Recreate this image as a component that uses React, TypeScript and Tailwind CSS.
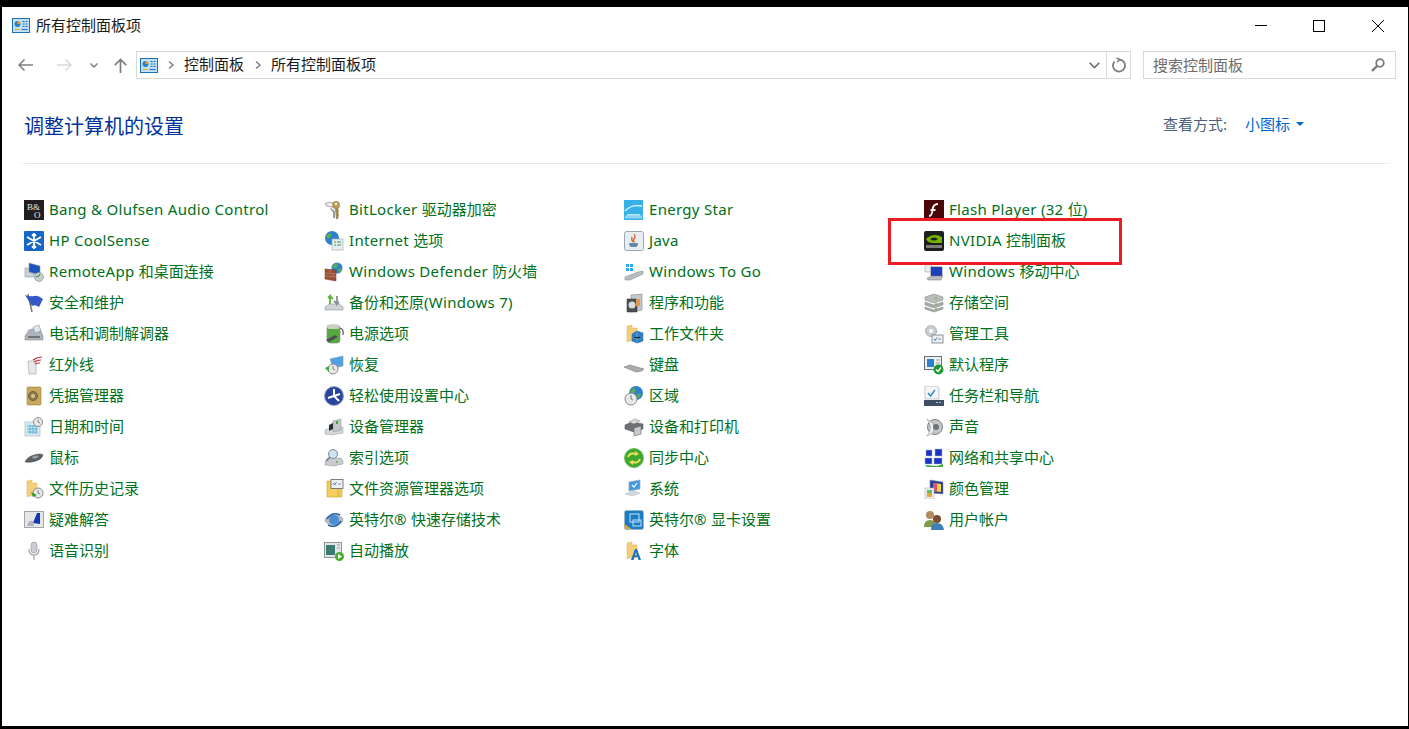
import type { ReactNode } from "react";

const Svg = ({ children }: { children: ReactNode }) => (
  <svg viewBox="0 0 20 20" className="w-5 h-5 shrink-0">
    {children}
  </svg>
);

// Little clock badge shared by a few of the icons
const Clock = ({ x = 14, y = 14, r = 5 }: { x?: number; y?: number; r?: number }) => (
  <>
    <circle cx={x} cy={y} r={r} fill="#e8e8e8" stroke="#8a8a8a" />
    <path d={`M${x} ${y - r + 2}V${y}L${x + 2} ${y + 1}`} stroke="#666" fill="none" strokeWidth="0.8" />
  </>
);

const Globe = ({ x = 8, y = 7, r = 6 }: { x?: number; y?: number; r?: number }) => (
  <>
    <circle cx={x} cy={y} r={r} fill="#2f7fd0" />
    <path d={`M${x - r + 1} ${y - 2}q3 -3 5 -3q1 3 -1 5q-3 1 -4 -2z`} fill="#57b04a" />
    <path d={`M${x + 1} ${y + 1}q3 -1 4 0q0 3 -3 4z`} fill="#57b04a" />
  </>
);

const Folder = () => (
  <path d="M3 2l5 -1v3h5v13H5l-2 1z" fill="#f2cf78" stroke="#d9b35a" strokeWidth="0.5" />
);

const Monitor = ({ fill = "#3f9be6" }: { fill?: string }) => (
  <>
    <path d="M5 3l11 -2v9l-11 2z" fill={fill} stroke="#9aa4ad" strokeWidth="0.7" />
    <path d="M1 15l9 -3 6 2-8 3z" fill="#d4d8dc" stroke="#aab0b6" strokeWidth="0.5" />
  </>
);

const icons: Record<string, ReactNode> = {
  bo: (
    <>
      <rect width="20" height="20" fill="#231f20" />
      <text x="3" y="10" fontSize="9" fill="#e5e5e5" fontFamily="Liberation Serif, serif">B&amp;</text>
      <text x="10" y="17.500" fontSize="9" fill="#e5e5e5" fontFamily="Liberation Serif, serif">O</text>
    </>
  ),
  snow: (
    <>
      <rect width="20" height="20" rx="1" fill="#1668c8" />
      <path d="M10 2v16M3 6l14 8M17 6L3 14M8 3.500l2 2 2-2M8 16.500l2-2 2 2" stroke="#fff" strokeWidth="1.800" fill="none" />
    </>
  ),
  remote: (
    <>
      <rect x="1" y="6" width="9" height="9" fill="#ccd2d8" stroke="#8f98a0" strokeWidth="0.6" />
      <path d="M5 1l11 3v9L5 10z" fill="#1c54b8" stroke="#8f98a0" strokeWidth="0.6" />
      <circle cx="15" cy="15" r="4.500" fill="#c9cdd0" stroke="#8a8a8a" strokeWidth="0.6" />
      <path d="M12 15l3-1 1-2" stroke="#2f8f3a" fill="none" />
    </>
  ),
  flag: (
    <>
      <path d="M4 1l4 18" stroke="#777" strokeWidth="1.500" />
      <path d="M1 2q5 2 9 1t9 3l-4 8q-4-3-7-1z" fill="#3458c4" />
    </>
  ),
  phone: (
    <>
      <path d="M1 12l4-6 10-3 4 9v4H1z" fill="#aeb4b9" stroke="#858b90" strokeWidth="0.6" />
      <path d="M9 3l6-2 2 6-6 2z" fill="#dbe6ee" stroke="#7f8a92" strokeWidth="0.5" />
      <path d="M4 12h12v2H4z" fill="#6f757a" />
    </>
  ),
  infrared: (
    <>
      <path d="M4 6h8v13H5z" fill="#e6e8ea" stroke="#a7abaf" strokeWidth="0.7" />
      <path d="M9 5q4-3 9-3M10 7q3-2 7-2M11 9q2-1 5-1" stroke="#c9333a" fill="none" strokeWidth="1.200" />
    </>
  ),
  vault: (
    <>
      <rect x="3" y="1" width="14" height="18" rx="1" fill="#c9a85c" stroke="#9c8144" strokeWidth="0.6" />
      <circle cx="9" cy="10" r="4.500" fill="#8f7a4c" stroke="#6e5d38" />
      <circle cx="9" cy="10" r="2" fill="#d8c48f" />
    </>
  ),
  calendar: (
    <>
      <rect x="1" y="5" width="15" height="14" fill="#d9e9f3" stroke="#a6b2ba" strokeWidth="0.6" />
      <path d="M3 9h11M3 12h11M3 15h11M6 8v9M9 8v9M12 8v9" stroke="#3fa6d0" strokeWidth="0.8" />
      <Clock x={14} y={5} r={4.500} />
    </>
  ),
  mouse: (
    <>
      <path d="M1 14q2-5 9-7t9 0q-1 4-7 6t-11 1z" fill="#5c6266" stroke="#3f4447" strokeWidth="0.5" />
      <path d="M9 8q4-1 6 0l-2 2q-3 1-5 0z" fill="#9aa0a5" />
    </>
  ),
  history: (
    <>
      <Folder />
      <Clock x={14} y={14} r={5} />
      <path d="M7 13l2 5 4-2" fill="#2f9e3a" />
    </>
  ),
  trouble: (
    <>
      <rect x="0.500" y="1.500" width="19" height="16" fill="#e4e6e8" stroke="#a2a6aa" />
      <path d="M9 13l4-10h3v11z" fill="#1436b4" />
      <path d="M3 16l2-5h4l1 5z" fill="#b4b8bc" />
    </>
  ),
  mic: (
    <>
      <rect x="7" y="1" width="6" height="11" rx="3" fill="#c9ccd0" stroke="#8f9296" strokeWidth="0.6" />
      <path d="M5 8q0 6 5 6t5-6M10 14v5" stroke="#a0a3a7" fill="none" strokeWidth="1.200" />
    </>
  ),
  keys: (
    <>
      <path d="M1 4q4-3 9 0M1 4q3 3 9 3" stroke="#b4b8bc" fill="none" strokeWidth="1.300" />
      <circle cx="12" cy="5" r="4" fill="#b59a5c" />
      <circle cx="12" cy="4" r="1.300" fill="#f2ead0" />
      <path d="M11 8h3l1 4-1 1 1 1-1 5h-2z" fill="#a18a52" />
      <path d="M7 8l4 3v7h-2v-6l-3-3z" fill="#9a9da0" />
    </>
  ),
  ie: (
    <>
      <Globe x={8} y={7} r={7} />
      <rect x="8" y="8" width="11" height="11" fill="#e8edf2" stroke="#9aa5ae" strokeWidth="0.6" />
      <path d="M10 11h2M13 11h4M10 14h2M13 14h4" stroke="#3f9a4a" />
    </>
  ),
  firewall: (
    <>
      <Globe x={13} y={6} r={5.500} />
      <path d="M1 7l11 1v11l-11-2z" fill="#9a4f35" stroke="#6e3523" strokeWidth="0.5" />
      <path d="M1 11l11 1M1 14l11 1M6 8v3M9 12v3" stroke="#c98e72" strokeWidth="0.6" />
    </>
  ),
  backup: (
    <>
      <path d="M1 14l5-3h9l4 3v3H1z" fill="#cfd3d6" stroke="#8f9396" strokeWidth="0.6" />
      <path d="M6 11V3l-2 2M6 3l3 3" stroke="#5cb23c" fill="none" strokeWidth="1.800" />
      <path d="M13 3v8l2-2M13 11l-3-3" stroke="#8a8f92" fill="none" strokeWidth="1.800" />
    </>
  ),
  power: (
    <>
      <rect x="3" y="1" width="13" height="18" rx="3" fill="#56a83f" stroke="#7d8a78" strokeWidth="0.6" />
      <rect x="3" y="1" width="13" height="4" rx="2" fill="#c6d0c2" />
      <path d="M15 4q5 0 4 7" stroke="#555" fill="none" strokeWidth="1.200" />
      <path d="M2 16l9-5 3 2-9 5z" fill="#4a4f52" />
    </>
  ),
  recovery: (
    <>
      <path d="M6 4l13-3v10l-10 2z" fill="#4fa3e4" stroke="#8a98a3" strokeWidth="0.6" />
      <Clock x={9} y={14} r={5} />
      <path d="M1 13l4-2v6z" fill="#3fa53f" />
    </>
  ),
  ease: (
    <>
      <circle cx="10" cy="10" r="9.500" fill="#27479f" stroke="#9aa5c4" />
      <path d="M10 3v7l6-2M10 10l5 5M10 10l-6 2" stroke="#fff" strokeWidth="2" fill="none" />
    </>
  ),
  devmgr: (
    <>
      <path d="M1 13l7-3 11 0v6l-11 2-7-1z" fill="#d5d8da" stroke="#989c9f" strokeWidth="0.5" />
      <path d="M9 4l8-2v11l-8 2z" fill="#c4c7ca" stroke="#8c9093" strokeWidth="0.5" />
      <path d="M5 8l4-2v6l-4 2z" fill="#2a2d2f" />
      <rect x="12" y="4" width="2" height="3" fill="#3fa53f" />
    </>
  ),
  index: (
    <>
      <path d="M1 14l7-4h9l2 3v3l-9 2-9-1z" fill="#c8ccd0" stroke="#909498" strokeWidth="0.5" />
      <circle cx="9" cy="6" r="4.500" fill="#cfe2f2" stroke="#7f8a94" />
      <path d="M6 9l-4 4" stroke="#7f8a94" strokeWidth="1.800" />
      <circle cx="13" cy="14" r="1" fill="#5cb23c" />
    </>
  ),
  explorer: (
    <>
      <path d="M3 2h11v16H3z" fill="#f2cf60" stroke="#d9b040" strokeWidth="0.8" />
      <path d="M14 18h4V8h-4z" fill="#eec654" stroke="#d9b040" strokeWidth="0.6" />
      <rect x="7" y="0.500" width="12" height="9" fill="#eef1f4" stroke="#5a6470" strokeWidth="0.8" />
      <path d="M9 4l1.500 2 2-3" stroke="#2f7fd0" fill="none" />
      <path d="M14 5h3" stroke="#8a929a" />
    </>
  ),
  rst: (
    <>
      <ellipse cx="10" cy="10" rx="9" ry="5" fill="#b8bec4" stroke="#858b91" strokeWidth="0.5" />
      <circle cx="10" cy="10" r="5" fill="#4a8ed0" />
      <path d="M3 9q5-8 13-4M17 11q-5 8-13 4" stroke="#1f5fa8" fill="none" strokeWidth="1.500" />
    </>
  ),
  autoplay: (
    <>
      <rect x="0.500" y="1.500" width="17" height="15" fill="#e3e5e7" stroke="#8f9497" />
      <rect x="2" y="4" width="9" height="10" fill="#3c7a74" />
      <path d="M13 4h3M13 7h3" stroke="#9aa0a4" />
      <circle cx="15.500" cy="15.500" r="4.500" fill="#46ad2f" />
      <path d="M14 13l4 2.500-4 2.500z" fill="#fff" />
    </>
  ),
  energy: (
    <>
      <rect width="19" height="20" fill="#38b0e8" />
      <path d="M1 11q6-7 17-5M3 15h13" stroke="#dff3fc" strokeWidth="1.300" fill="none" />
      <rect x="1" y="15.500" width="17" height="3" fill="#8fd4f3" />
    </>
  ),
  java: (
    <>
      <rect x="0.500" y="0.500" width="19" height="19" rx="2" fill="#e9edf1" stroke="#9aa7b3" />
      <path d="M10 3q2 3 0 5t1 3M8 6q-1 3 1 5" stroke="#d8622c" fill="none" strokeWidth="1.300" />
      <path d="M5 12h9q0 3-2 4H7q-2-1-2-4z" fill="#5d88a8" />
    </>
  ),
  togo: (
    <>
      <path d="M2 2h3v3H2zM6 2h3v3H6zM2 6h3v3H2zM6 6h3v3H6z" fill="#2aa8f0" />
      <path d="M1 15l13-5 5-1v3l-13 6-5 0z" fill="#b9bdc1" stroke="#7d8184" strokeWidth="0.5" />
    </>
  ),
  programs: (
    <>
      <path d="M7 2l11-1v16l-11 2z" fill="#c5c8ca" stroke="#83878a" strokeWidth="0.6" />
      <path d="M3 6h10v13H3z" fill="#4c4f51" stroke="#2f3133" strokeWidth="0.5" />
      <circle cx="8" cy="12" r="3.500" fill="#d9dcde" />
      <rect x="12" y="6" width="4" height="7" fill="#e09a4a" />
    </>
  ),
  workfolder: (
    <>
      <Folder />
      <path d="M8 10l5-3 6 2v8l-6 2-5-2z" fill="#2f7fc4" stroke="#1f5f9c" strokeWidth="0.5" />
      <path d="M8 13l5 2 6-2M13 8v10" stroke="#7fc0ec" strokeWidth="0.6" />
    </>
  ),
  keyboard: <path d="M0 12l6-2 14 4-2 2-6 1z" fill="#a9adb1" stroke="#75797c" strokeWidth="0.6" />,
  region: (
    <>
      <Globe x={12} y={7} r={7} />
      <Clock x={7} y={13} r={6} />
    </>
  ),
  printer: (
    <>
      <path d="M1 8l7-3 11 2v5l-9 3-9-3z" fill="#6e7174" stroke="#444" strokeWidth="0.5" />
      <path d="M5 5l6-3 5 2-6 3z" fill="#d9dbdd" stroke="#777" strokeWidth="0.5" />
      <path d="M10 11l7-2v8l-7 2z" fill="#c8cacc" stroke="#666" strokeWidth="0.6" />
    </>
  ),
  sync: (
    <>
      <circle cx="10" cy="10" r="9.500" fill="#3fa82f" stroke="#6fbd5f" />
      <path d="M4 9q2-5 8-3M16 11q-2 5-8 3" stroke="#f4dd5c" fill="none" strokeWidth="2" />
      <path d="M11 3l4 3-4 2zM9 17l-4-3 4-2z" fill="#f4dd5c" />
    </>
  ),
  system: (
    <>
      <Monitor />
      <path d="M8 6l2 2 3-4" stroke="#fff" fill="none" strokeWidth="1.200" />
    </>
  ),
  intelgfx: (
    <>
      <rect x="0.500" y="0.500" width="19" height="19" rx="2" fill="#1b7cc4" stroke="#9ab6cc" />
      <path d="M0 14l8 5H1z" fill="#d9a83c" />
      <rect x="6" y="4" width="9" height="8" fill="none" stroke="#bfe2f6" />
      <rect x="9" y="10" width="8" height="6" fill="none" stroke="#bfe2f6" />
    </>
  ),
  font: (
    <>
      <Folder />
      <path d="M7 19l4-11h2l4 11h-2.500l-.8-3h-3.400l-.8 3zM10.900 14.500h2.200l-1.100-3.500z" fill="#1573c9" />
    </>
  ),
  flash: (
    <>
      <rect width="20" height="20" fill="#4a0606" />
      <path d="M14 4q-5 0-5.500 6T5 16M6.500 10h5" stroke="#fff" fill="none" strokeWidth="1.800" />
    </>
  ),
  nvidia: (
    <>
      <rect width="20" height="20" rx="2" fill="#1e1f1d" />
      <path d="M2 8q7-7 16-2v6H9q-5 0-7-4z" fill="#74b300" />
      <path d="M6 8q4-3 8 0-4 3-8 0z" fill="#1e1f1d" />
      <rect x="2" y="14" width="16" height="3" fill="#7a7d78" />
    </>
  ),
  mobility: (
    <>
      <rect x="1" y="1" width="7" height="9" fill="#e6ecf2" stroke="#9aa2aa" strokeWidth="0.5" />
      <path d="M7 5h11v9H7z" fill="#1d3fc0" stroke="#444" strokeWidth="0.6" />
      <path d="M3 16l5-2h11l-2 4H4z" fill="#b9bdc1" stroke="#777" strokeWidth="0.5" />
    </>
  ),
  storage: (
    <>
      <path d="M1 4l9-3 9 3v3l-9 3-9-3z" fill="#b9bdb8" stroke="#7d817c" strokeWidth="0.5" />
      <path d="M1 9l9 3 9-3v3l-9 3-9-3z" fill="#a9ada8" stroke="#7d817c" strokeWidth="0.5" />
      <path d="M1 14l9 3 9-3v2l-9 3-9-3z" fill="#a9ada8" stroke="#7d817c" strokeWidth="0.5" />
      <path d="M12 4v2M12 10v2M12 15v2" stroke="#5cb23c" />
    </>
  ),
  admin: (
    <>
      <circle cx="7" cy="7" r="5.500" fill="#c9cccf" stroke="#999" strokeDasharray="2 1" />
      <circle cx="7" cy="7" r="2" fill="#fff" />
      <rect x="8" y="11" width="11" height="8" fill="#eef1f4" stroke="#6f7880" strokeWidth="0.8" />
      <path d="M10 15l1 1.500 2-3" stroke="#2f7fd0" fill="none" />
      <path d="M14 15h3" stroke="#8a929a" />
    </>
  ),
  defaults: (
    <>
      <rect x="0.500" y="1.500" width="17" height="13" fill="#eef1f4" stroke="#68727a" />
      <rect x="3" y="4" width="7" height="8" fill="#2f7fd0" />
      <path d="M12 5h4M12 8h4" stroke="#9aa2a8" />
      <circle cx="14.500" cy="14.500" r="5" fill="#1f9a33" />
      <path d="M12 14.500l2 2 3-4" stroke="#fff" fill="none" strokeWidth="1.300" />
    </>
  ),
  taskbar: (
    <>
      <path d="M1 0h12l2 2v11H1z" fill="#f4f5f6" stroke="#8f959a" strokeWidth="0.5" />
      <path d="M4 7l2.500 3L11 4" stroke="#2d8fd0" fill="none" strokeWidth="1.400" />
      <rect y="14" width="20" height="6" fill="#3d4d63" />
      <path d="M12 16.500h2M15 16.500h2" stroke="#b8c2cc" strokeWidth="1.200" />
    </>
  ),
  sound: (
    <>
      <circle cx="11" cy="10" r="7.500" fill="#c4c6c8" stroke="#7d8083" />
      <path d="M3 2q7 8 0 17l6-3q2-5 0-10z" fill="#eef0f1" stroke="#8f9295" strokeWidth="0.6" />
      <circle cx="12" cy="10" r="3" fill="#6f7275" />
    </>
  ),
  network: (
    <>
      <path d="M2 2h6v6H2zM11 1h7v7h-7zM1 10h7v6H1zM10 10h8v6h-8z" fill="#1b34c4" stroke="#a8b2d8" strokeWidth="0.5" />
      <path d="M1 17l12 1 6-2v3H3z" fill="#3fa53f" />
    </>
  ),
  color: (
    <>
      <path d="M6 1l13 2v12l-13-1z" fill="#273c9c" stroke="#8a8f94" strokeWidth="0.6" />
      <path d="M9 4l8 1v8l-8-1z" fill="#e8d84c" />
      <path d="M9 4l4 .5v8L9 12z" fill="#e2506a" />
      <rect x="1" y="9" width="9" height="11" fill="#eceeef" stroke="#aaa" strokeWidth="0.5" />
      <path d="M3 11h5v3H3z" fill="#55c46a" />
      <path d="M3 14h5v4H3z" fill="#e0a83c" />
    </>
  ),
  users: (
    <>
      <circle cx="6" cy="5" r="4" fill="#b58a5c" />
      <path d="M0 17q0-7 6-7t6 7z" fill="#7f9a4c" />
      <circle cx="13" cy="9" r="4" fill="#7a4f33" />
      <path d="M7 20q0-7 6-7t7 7z" fill="#3f7fb4" />
    </>
  ),
};

const columns: { name: string; icon: string }[][] = [
  [
    { name: "Bang & Olufsen Audio Control", icon: "bo" },
    { name: "HP CoolSense", icon: "snow" },
    { name: "RemoteApp 和桌面连接", icon: "remote" },
    { name: "安全和维护", icon: "flag" },
    { name: "电话和调制解调器", icon: "phone" },
    { name: "红外线", icon: "infrared" },
    { name: "凭据管理器", icon: "vault" },
    { name: "日期和时间", icon: "calendar" },
    { name: "鼠标", icon: "mouse" },
    { name: "文件历史记录", icon: "history" },
    { name: "疑难解答", icon: "trouble" },
    { name: "语音识别", icon: "mic" },
  ],
  [
    { name: "BitLocker 驱动器加密", icon: "keys" },
    { name: "Internet 选项", icon: "ie" },
    { name: "Windows Defender 防火墙", icon: "firewall" },
    { name: "备份和还原(Windows 7)", icon: "backup" },
    { name: "电源选项", icon: "power" },
    { name: "恢复", icon: "recovery" },
    { name: "轻松使用设置中心", icon: "ease" },
    { name: "设备管理器", icon: "devmgr" },
    { name: "索引选项", icon: "index" },
    { name: "文件资源管理器选项", icon: "explorer" },
    { name: "英特尔® 快速存储技术", icon: "rst" },
    { name: "自动播放", icon: "autoplay" },
  ],
  [
    { name: "Energy Star", icon: "energy" },
    { name: "Java", icon: "java" },
    { name: "Windows To Go", icon: "togo" },
    { name: "程序和功能", icon: "programs" },
    { name: "工作文件夹", icon: "workfolder" },
    { name: "键盘", icon: "keyboard" },
    { name: "区域", icon: "region" },
    { name: "设备和打印机", icon: "printer" },
    { name: "同步中心", icon: "sync" },
    { name: "系统", icon: "system" },
    { name: "英特尔® 显卡设置", icon: "intelgfx" },
    { name: "字体", icon: "font" },
  ],
  [
    { name: "Flash Player (32 位)", icon: "flash" },
    { name: "NVIDIA 控制面板", icon: "nvidia" },
    { name: "Windows 移动中心", icon: "mobility" },
    { name: "存储空间", icon: "storage" },
    { name: "管理工具", icon: "admin" },
    { name: "默认程序", icon: "defaults" },
    { name: "任务栏和导航", icon: "taskbar" },
    { name: "声音", icon: "sound" },
    { name: "网络和共享中心", icon: "network" },
    { name: "颜色管理", icon: "color" },
    { name: "用户帐户", icon: "users" },
  ],
];

const PanelIcon = ({ className }: { className: string }) => (
  <svg viewBox="0 0 18 15" className={className}>
    <rect x="0.500" y="0.500" width="17" height="14" fill="#bfe0f5" stroke="#1a6fb0" />
    <circle cx="5.500" cy="6" r="3" fill="#2c7fc4" />
    <path d="M5.500 6V3a3 3 0 0 1 3 3z" fill="#f0a030" />
    <path d="M10.500 3.500h2M13.500 3.500h2M10.500 6h2M13.500 6h2M10.500 8.500h2M13.500 8.500h2" stroke="#1a6fb0" />
    <path d="M2.500 11.500h5" stroke="#f0a030" />
    <path d="M9.500 11.500h6" stroke="#1a6fb0" />
  </svg>
);

const Crumb = () => (
  <svg viewBox="0 0 14 14" className="w-[14px] h-[14px] text-[#7d7d7d]">
    <path d="M5 3.500L9 7l-4 3.500" fill="none" stroke="currentColor" strokeWidth="1.500" />
  </svg>
);

// latin runs sit a bit wider than the CJK ones, so they get their own tracking
const Label = ({ name }: { name: string }) => (
  <span>
    {name.split(/([\u0000-\u00ff]+)/).map((part, i) =>
      i % 2 === 1 ? (
        <span key={i} className="tracking-[0.3px]">{part}</span>
      ) : (
        part
      )
    )}
  </span>
);

export default function App() {
  return (
    <div className="relative h-screen overflow-hidden bg-white border-t-[7px] border-l-2 border-r border-b-[3px] border-black font-['Noto_Sans','Noto_Sans_CJK_SC',sans-serif] text-[15px]">
      {/* Title bar */}
      <div className="flex items-center h-[37px] pl-[10px]">
        <PanelIcon className="w-[18px] h-[15px]" />
        <span className="ml-[6px] text-[#1a1a1a]">所有控制面板项</span>
        <div className="ml-auto flex items-center">
          <svg viewBox="0 0 12 12" className="w-3 h-3 mr-[46px]"><path d="M0 5.500h12" stroke="#000" /></svg>
          <svg viewBox="0 0 12 12" className="w-3 h-3 mr-[47px]"><rect x="0.500" y="0.500" width="11" height="11" fill="none" stroke="#000" /></svg>
          <svg viewBox="0 0 12 12" className="w-3 h-3 mr-[24px]"><path d="M0 0l12 12M12 0L0 12" stroke="#000" /></svg>
        </div>
      </div>

      {/* Nav and address row */}
      <div className="flex items-center h-[28px] mt-[7px] pl-[16px] pr-[12px]">
        <svg viewBox="0 0 15 12" className="w-[15px] h-[12px] shrink-0">
          <path d="M15 6H1M6.500 .5L1 6l5.500 5.500" fill="none" stroke="#7d7d7d" strokeWidth="1.500" />
        </svg>
        <svg viewBox="0 0 15 12" className="w-[15px] h-[12px] ml-[24px] shrink-0">
          <path d="M0 6h14M8.500 .5L14 6l-5.500 5.500" fill="none" stroke="#d9d9d9" strokeWidth="1.500" />
        </svg>
        <svg viewBox="0 0 8 5" className="w-[8px] h-[5px] ml-[18px] shrink-0">
          <path d="M.5 .5L4 4l3.500-3.500" fill="none" stroke="#7d7d7d" strokeWidth="1.500" />
        </svg>
        <svg viewBox="0 0 13 15" className="w-[13px] h-[15px] ml-[16px] shrink-0">
          <path d="M6.500 15V1.500M.8 7.200L6.500 1.500l5.700 5.700" fill="none" stroke="#7d7d7d" strokeWidth="1.700" />
        </svg>
        <div className="flex items-center w-[995px] h-[28px] ml-[9px] border border-[#d9d9d9]">
          <PanelIcon className="w-[18px] h-[15px] ml-[3px]" />
          <div className="ml-[6px]"><Crumb /></div>
          <span className="ml-[6px] pb-[2px] text-[#1a1a1a]">控制面板</span>
          <div className="ml-[7px]"><Crumb /></div>
          <span className="ml-[6px] pb-[2px] text-[#1a1a1a]">所有控制面板项</span>
          <svg viewBox="0 0 11 7" className="w-[11px] h-[7px] ml-auto mr-[6px]">
            <path d="M.7 .7L5.500 5.500 10.300 .7" fill="none" stroke="#6d6d6d" strokeWidth="1.600" />
          </svg>
          <div className="flex items-center justify-center w-[24px] h-full border-l border-[#d9d9d9]">
            <svg viewBox="0 0 16 16" className="w-[16px] h-[16px]">
              <path d="M8 2.500a6 6 0 1 1-4.500 2" fill="none" stroke="#7d7d7d" strokeWidth="1.800" />
              <path d="M5.500 .8L8.500 2.500 6.200 5.300" fill="none" stroke="#7d7d7d" strokeWidth="1.500" />
            </svg>
          </div>
        </div>
        <div className="flex items-center w-[253px] h-[28px] ml-[12px] pl-[9px] pr-[10px] border border-[#d9d9d9] text-[#6d6d6d]">
          <span>搜索控制面板</span>
          <svg viewBox="0 0 14 14" className="w-[14px] h-[14px] ml-auto">
            <circle cx="9" cy="5" r="3.800" fill="none" stroke="#7a7a7a" strokeWidth="1.800" />
            <path d="M6.200 7.800L1 13" stroke="#7a7a7a" strokeWidth="2.400" />
          </svg>
        </div>
      </div>

      {/* Heading */}
      <div className="flex items-start h-[84px] pl-[22px] pr-[104px]">
        <h1 className="mt-[34px] text-[20px] leading-[28px] text-[#003399] font-normal">调整计算机的设置</h1>
        <span className="ml-auto mt-[34px] w-[68px] leading-[22px] text-[#4c607a]">查看方式:</span>
        <span className="ml-[14px] mt-[34px] leading-[22px] text-[#0066cc]">小图标</span>
        <span className="ml-[6px] mt-[43px] border-x-[4px] border-t-[4px] border-x-transparent border-t-[#0066cc]" />
      </div>
      <div className="h-px mx-[14px] bg-[linear-gradient(90deg,transparent,#dfe7ef_1%,#dfe7ef_99%,transparent)]" />

      {/* Items */}
      <div className="flex pl-[22px] pt-[30px]">
        {columns.map((col, i) => (
          <div key={i} className="flex flex-col w-[300px]">
            {col.map((item) => (
              <a key={item.name} className="flex items-center h-[31px] gap-[5px] text-[#00701a] whitespace-nowrap">
                <Svg>{icons[item.icon]}</Svg>
                <Label name={item.name} />
              </a>
            ))}
          </div>
        ))}
      </div>

      {/* Red annotation around the NVIDIA row */}
      <div className="absolute left-[886px] top-[211px] w-[234px] h-[47px] border-[3px] border-[#ed1c24]" />
    </div>
  );
}
